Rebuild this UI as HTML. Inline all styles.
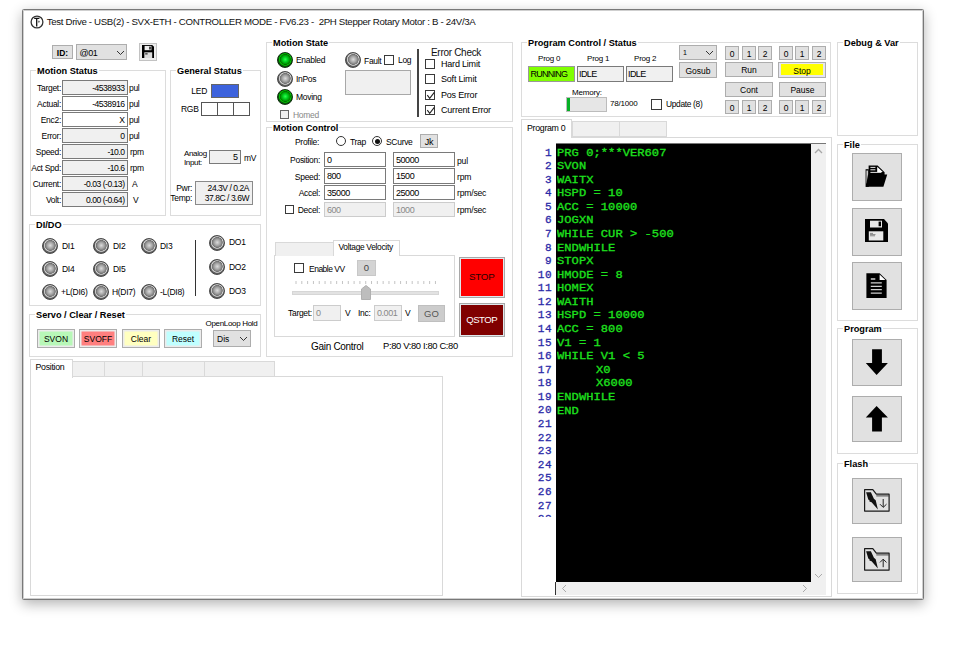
<!DOCTYPE html>
<html><head><meta charset="utf-8">
<style>
*{box-sizing:border-box;margin:0;padding:0}
html,body{width:968px;height:646px;background:#fff;overflow:hidden;font-family:"Liberation Sans",sans-serif;color:#000}
.a{position:absolute}
.t{position:absolute;font-size:8.5px;line-height:10px;white-space:nowrap;letter-spacing:-0.3px;margin-top:-0.3px}
.win{position:absolute;left:22px;top:9px;width:902px;height:591px;border-radius:1.5px;border:1px solid #787878;background:#fff;box-shadow:0 4px 13px rgba(0,0,0,.3),inset 0 0 0 1px #cfcfcf}
.grp{position:absolute;border:1px solid #dcdcdc}
.gt{position:absolute;font-size:9.2px;font-weight:bold;line-height:10px;background:#fff;padding:0 1px;white-space:nowrap;margin-top:1px}
.box{position:absolute;border:1px solid #7a7a7a;background:#f0f0f0;font-size:9px;line-height:13px;white-space:nowrap;overflow:hidden;letter-spacing:-0.45px}
.w{background:#fff}
.r{text-align:right;padding-right:2.5px}
.l{padding-left:2px}
.btn{position:absolute;border:1px solid #adadad;background:#e1e1e1;font-size:8.5px;text-align:center;white-space:nowrap;padding-top:0.7px}
.led{position:absolute;width:16px;height:16px;border-radius:50%;border:1.3px solid #474747}
.lg{background:radial-gradient(circle 6.7px at 52% 46%,#dcdcdc 0,#a2a2a2 3.2px,#7e7e7e 4.7px,#707070 5.1px,#d2d2d2 5.6px,#bababa 6.1px,#5e5e5e 6.7px)}
.lgr{border-color:#0e300e;background:radial-gradient(circle 6.7px at 52% 46%,#30ff50 0,#00d020 2.4px,#009000 4.6px,#006a00 5.1px,#00c400 5.6px,#00b000 6.1px,#0a500a 6.7px)}
.cb{position:absolute;width:10px;height:10px;border:1px solid #3a3a3a;background:#fff}
</style></head><body>
<div class="win"></div>
<!-- title -->
<svg class="a" style="left:29.7px;top:14.9px" width="14" height="14" viewBox="0 0 14 14"><circle cx="7" cy="7" r="5.9" fill="none" stroke="#333" stroke-width="1.3"/><path d="M4.2 3.4h5.2M6.7 3.4v8" stroke="#111" stroke-width="1.3" fill="none"/><path d="M8.4 6.6h1.4M8.8 5.6v2.2" stroke="#444" stroke-width=".7"/></svg>
<div class="t" style="left:46.7px;top:16px;font-size:9.7px;line-height:12px;color:#111;letter-spacing:-0.33px">Test Drive - USB(2) - SVX-ETH - CONTROLLER MODE - FV6.23 -&nbsp; 2PH Stepper Rotary Motor : B - 24V/3A</div>
<!-- ID row -->
<div class="btn" style="left:52px;top:45px;width:21px;height:14px;font-weight:bold;font-size:8.5px;line-height:13px">ID:</div>
<div class="btn" style="left:76px;top:44px;width:51px;height:16px;text-align:left;padding-left:2.5px;font-size:9px;letter-spacing:-0.4px;line-height:14px">@01</div>
<svg class="a" style="left:115.5px;top:50px" width="9" height="6" viewBox="0 0 9 6"><path d="M1 1l3.5 3.5L8 1" fill="none" stroke="#333" stroke-width="1"/></svg>
<div class="btn" style="left:139px;top:43px;width:18px;height:18px;background:#ededed;border-color:#c2c2c2"></div>
<svg class="a" style="left:141.8px;top:45.1px" width="12.5" height="13" viewBox="0 0 12.5 13"><path d="M0 0H10.2L12.5 2.3V13H0z" fill="#000"/><rect x="2.6" y="0.9" width="6.8" height="4.3" fill="#ececec"/><rect x="7.3" y="1.6" width="1.4" height="2.9" fill="#000"/><rect x="2.3" y="7.3" width="7.9" height="5.7" fill="#dcdcdc"/><path d="M3.2 8.9h2.4" stroke="#000" stroke-width="1"/></svg>

<!-- Motion Status group -->
<div class="grp" style="left:30px;top:70px;width:136px;height:146px"></div>
<div class="gt" style="left:36px;top:65px">Motion Status</div>
<div class="t" style="right:907px;top:83px">Target:</div>
<div class="box r" style="line-height:14px;left:62px;top:80px;width:66px;height:15px;font-size:8.6px;letter-spacing:-0.5px">-4538933</div>
<div class="t" style="left:129px;top:83px">pul</div>
<div class="t" style="right:907px;top:99px">Actual:</div>
<div class="box r w" style="line-height:14px;left:62px;top:96px;width:66px;height:15px;font-size:8.6px;letter-spacing:-0.5px">-4538916</div>
<div class="t" style="left:129px;top:99px">pul</div>
<div class="t" style="right:907px;top:115px">Enc2:</div>
<div class="box r w" style="line-height:14px;left:62px;top:112px;width:66px;height:15px;font-size:8.6px;letter-spacing:-0.5px">X</div>
<div class="t" style="left:129px;top:115px">pul</div>
<div class="t" style="right:907px;top:131px">Error:</div>
<div class="box r" style="line-height:14px;left:62px;top:128px;width:66px;height:15px;font-size:8.6px;letter-spacing:-0.5px">0</div>
<div class="t" style="left:129px;top:131px">pul</div>
<div class="t" style="right:907px;top:147px">Speed:</div>
<div class="box r" style="line-height:14px;left:62px;top:144px;width:66px;height:15px;font-size:8.6px;letter-spacing:-0.5px">-10.0</div>
<div class="t" style="left:130px;top:147px">rpm</div>
<div class="t" style="right:907px;top:163px">Act Spd:</div>
<div class="box r" style="line-height:14px;left:62px;top:160px;width:66px;height:15px;font-size:8.6px;letter-spacing:-0.5px">-10.6</div>
<div class="t" style="left:130px;top:163px">rpm</div>
<div class="t" style="right:907px;top:179px">Current:</div>
<div class="box r" style="line-height:14px;left:62px;top:176px;width:66px;height:15px;font-size:8.6px;letter-spacing:-0.5px">-0.03 (-0.13)</div>
<div class="t" style="left:132px;top:179px">A</div>
<div class="t" style="right:907px;top:195px">Volt:</div>
<div class="box r" style="line-height:14px;left:62px;top:192px;width:66px;height:15px;font-size:8.6px;letter-spacing:-0.5px">0.00 (-0.64)</div>
<div class="t" style="left:133px;top:195px">V</div>

<!-- General Status -->
<div class="grp" style="left:170px;top:70px;width:91px;height:146px"></div>
<div class="gt" style="left:176px;top:65px">General Status</div>
<div class="t" style="right:761px;top:86px">LED</div>
<div class="a" style="left:211px;top:84px;width:28px;height:14px;background:#3d63dd;border:1px solid #666"></div>
<div class="t" style="left:181px;top:104px">RGB</div>
<div class="a" style="left:201px;top:102px;width:17px;height:14px;border:1px solid #555;background:#fff"></div>
<div class="a" style="left:217px;top:102px;width:17px;height:14px;border:1px solid #555;background:#fff"></div>
<div class="a" style="left:233px;top:102px;width:17px;height:14px;border:1px solid #555;background:#fff"></div>
<div class="t" style="left:184px;top:149px;line-height:9.5px;font-size:8px;letter-spacing:-0.35px">Analog<br>Input:</div>
<div class="box r" style="left:209px;top:150px;width:32px;height:14px;line-height:13px">5</div>
<div class="t" style="left:244px;top:153px">mV</div>
<div class="t" style="right:776px;top:183px">Pwr:</div>
<div class="t" style="right:776px;top:193px">Temp:</div>
<div class="box r" style="left:195px;top:181px;width:58px;height:24px;line-height:10px;padding-top:1px;padding-right:3px;font-size:8.5px;letter-spacing:-0.45px;border-color:#8a8a8a">24.3V / 0.2A<br>37.8C / 3.6W</div>

<!-- DI/DO -->
<div class="grp" style="left:29px;top:224px;width:232px;height:82px"></div>
<div class="gt" style="left:35px;top:219px">DI/DO</div>
<div class="led lg" style="left:42px;top:238px"></div><div class="t" style="left:62px;top:241px">DI1</div>
<div class="led lg" style="left:93px;top:238px"></div><div class="t" style="left:113px;top:241px">DI2</div>
<div class="led lg" style="left:141px;top:238px"></div><div class="t" style="left:160px;top:241px">DI3</div>
<div class="led lg" style="left:42px;top:261px"></div><div class="t" style="left:62px;top:264px">DI4</div>
<div class="led lg" style="left:93px;top:261px"></div><div class="t" style="left:113px;top:264px">DI5</div>
<div class="led lg" style="left:42px;top:284px"></div><div class="t" style="left:61px;top:287px">+L(DI6)</div>
<div class="led lg" style="left:93px;top:284px"></div><div class="t" style="left:112px;top:287px">H(DI7)</div>
<div class="led lg" style="left:141px;top:284px"></div><div class="t" style="left:160px;top:287px">-L(DI8)</div>
<div class="a" style="left:195px;top:240px;width:1px;height:56px;background:#333"></div>
<div class="led lg" style="left:209px;top:235px"></div><div class="t" style="left:229px;top:237px">DO1</div>
<div class="led lg" style="left:209px;top:259px"></div><div class="t" style="left:229px;top:262px">DO2</div>
<div class="led lg" style="left:209px;top:283px"></div><div class="t" style="left:229px;top:286px">DO3</div>

<!-- Servo -->
<div class="grp" style="left:29px;top:313.5px;width:232px;height:43.5px"></div>
<div class="gt" style="left:35px;top:308.5px">Servo / Clear / Reset</div>
<div class="btn" style="left:37px;top:329px;width:38px;height:19px;background:#b8f8b8;line-height:16px;box-shadow:inset 0 0 0 1.5px #ececec">SVON</div>
<div class="btn" style="left:79px;top:329px;width:38px;height:19px;background:#ff7f7f;line-height:16px;box-shadow:inset 0 0 0 1.5px #ececec">SVOFF</div>
<div class="btn" style="left:122px;top:329px;width:38px;height:19px;background:#ffffc0;line-height:16px;box-shadow:inset 0 0 0 1.5px #ececec">Clear</div>
<div class="btn" style="left:164px;top:329px;width:38px;height:19px;background:#c0ffff;line-height:16px;box-shadow:inset 0 0 0 1.5px #ececec">Reset</div>
<div class="t" style="left:205.5px;top:319px;font-size:8px;letter-spacing:-0.32px">OpenLoop Hold</div>
<div class="btn" style="left:213px;top:330px;width:38px;height:17px;text-align:left;padding-left:3px;line-height:15px">Dis</div>
<svg class="a" style="left:239px;top:336px" width="9" height="6" viewBox="0 0 9 6"><path d="M1 1l3.5 3.5L8 1" fill="none" stroke="#333" stroke-width="1"/></svg>

<!-- Position tabs -->
<div class="a" style="left:30px;top:376px;width:413px;height:220px;border:1px solid #d9d9d9;background:#fff"></div>
<div class="a" style="left:72px;top:361px;width:203px;height:16px;background:#f0f0f0;border:1px solid #d9d9d9"></div>
<div class="a" style="left:104px;top:361px;width:1px;height:15px;background:#d9d9d9"></div>
<div class="a" style="left:142px;top:361px;width:1px;height:15px;background:#d9d9d9"></div>
<div class="a" style="left:204px;top:361px;width:1px;height:15px;background:#d9d9d9"></div>
<div class="a" style="left:30px;top:359px;width:43px;height:18.5px;background:#fff;border:1px solid #d9d9d9;border-bottom:none"></div>
<div class="t" style="left:35.5px;top:362.5px;font-size:8.8px">Position</div>
<!-- Motion State -->
<div class="grp" style="left:265.5px;top:41.5px;width:247px;height:80.5px"></div>
<div class="gt" style="left:272px;top:37px">Motion State</div>
<div class="led lgr" style="left:277px;top:52px"></div><div class="t" style="left:296px;top:55px">Enabled</div>
<div class="led lg" style="left:277px;top:71px"></div><div class="t" style="left:296px;top:74px">InPos</div>
<div class="led lgr" style="left:277px;top:89px"></div><div class="t" style="left:296px;top:92px">Moving</div>
<div class="cb" style="left:280px;top:110px;width:9px;height:9px;border-color:#666;background:#f0f0f0"></div><div class="t" style="left:293px;top:110px;color:#888">Homed</div>
<div class="led lg" style="left:345px;top:52px"></div><div class="t" style="left:364px;top:56px">Fault</div>
<div class="cb" style="left:384px;top:55px"></div><div class="t" style="left:398px;top:55px">Log</div>
<div class="box" style="left:345px;top:70px;width:66px;height:25px;border-color:#a8a8a8"></div>
<div class="a" style="left:417px;top:49px;width:1.5px;height:68px;background:#444"></div>
<div class="t" style="left:431px;top:47px;font-size:10px;line-height:12px;color:#111">Error Check</div>
<div class="cb" style="left:425px;top:59px"></div><div class="t" style="left:441px;top:59px;font-size:9px;letter-spacing:-0.2px">Hard Limit</div>
<div class="cb" style="left:425px;top:74px"></div><div class="t" style="left:441px;top:74px;font-size:9px;letter-spacing:-0.2px">Soft Limit</div>
<div class="cb" style="left:425px;top:90px"></div><div class="t" style="left:441px;top:90px;font-size:9px;letter-spacing:-0.2px">Pos Error</div>
<svg class="a" style="left:426px;top:91px" width="9" height="9" viewBox="0 0 9 9"><path d="M1.3 4.2l2.4 3.2 4.6-6" fill="none" stroke="#222" stroke-width="1.1"/></svg>
<div class="cb" style="left:425px;top:105px"></div><div class="t" style="left:441px;top:105px;font-size:9px;letter-spacing:-0.2px">Current Error</div>
<svg class="a" style="left:426px;top:106px" width="9" height="9" viewBox="0 0 9 9"><path d="M1.3 4.2l2.4 3.2 4.6-6" fill="none" stroke="#222" stroke-width="1.1"/></svg>

<!-- Motion Control -->
<div class="grp" style="left:265.5px;top:127px;width:247px;height:230px"></div>
<div class="gt" style="left:272px;top:122px">Motion Control</div>
<div class="t" style="left:295px;top:137px">Profile:</div>
<div class="a" style="left:336px;top:136px;width:10px;height:10px;border:1px solid #333;border-radius:50%;background:#fff"></div>
<div class="t" style="left:350px;top:137px">Trap</div>
<div class="a" style="left:372px;top:136px;width:10px;height:10px;border:1px solid #333;border-radius:50%;background:#fff"></div>
<div class="a" style="left:374.5px;top:138.5px;width:5px;height:5px;border-radius:50%;background:#111"></div>
<div class="t" style="left:386px;top:137px">SCurve</div>
<div class="btn" style="left:420px;top:134px;width:18px;height:14px;line-height:12px;font-size:9px;letter-spacing:-0.3px">Jk</div>
<div class="t" style="right:648px;top:155px">Position:</div>
<div class="box w l" style="left:324px;top:152px;width:62px;height:15px;line-height:14px">0</div>
<div class="box w l" style="left:393px;top:152px;width:62px;height:15px;line-height:14px">50000</div>
<div class="t" style="left:457px;top:156px;font-size:8.6px;letter-spacing:-0.2px">pul</div>
<div class="t" style="right:648px;top:172px">Speed:</div>
<div class="box w l" style="left:324px;top:168px;width:62px;height:16px;line-height:15px">800</div>
<div class="box w l" style="left:393px;top:168px;width:62px;height:16px;line-height:15px">1500</div>
<div class="t" style="left:457px;top:172px;font-size:8.6px;letter-spacing:-0.2px">rpm</div>
<div class="t" style="right:648px;top:188px">Accel:</div>
<div class="box w l" style="left:324px;top:185px;width:62px;height:15px;line-height:14px">35000</div>
<div class="box w l" style="left:393px;top:185px;width:62px;height:15px;line-height:14px">25000</div>
<div class="t" style="left:457px;top:188px;font-size:8.6px;letter-spacing:-0.2px">rpm/sec</div>
<div class="cb" style="left:285px;top:205px;width:9px;height:9px"></div>
<div class="t" style="right:648px;top:205px">Decel:</div>
<div class="box l" style="left:324px;top:202px;width:62px;height:15px;line-height:14px;color:#888;border-color:#ccc">600</div>
<div class="box l" style="left:393px;top:202px;width:62px;height:15px;line-height:14px;color:#888;border-color:#ccc">1000</div>
<div class="t" style="left:457px;top:205px;font-size:8.6px;letter-spacing:-0.2px">rpm/sec</div>

<!-- VV tabs -->
<div class="a" style="left:274px;top:255px;width:181px;height:82px;border:1px solid #d9d9d9;background:#fff"></div>
<div class="a" style="left:275px;top:242px;width:59px;height:14px;background:#f0f0f0;border:1px solid #d9d9d9;border-bottom:none"></div>
<div class="a" style="left:333px;top:240px;width:67px;height:16px;background:#fff;border:1px solid #d9d9d9;border-bottom:none"></div>
<div class="t" style="left:338.5px;top:242.5px;font-size:8.4px;letter-spacing:-0.3px">Voltage Velocity</div>
<div class="cb" style="left:294px;top:263px"></div>
<div class="t" style="left:309px;top:264px;letter-spacing:-0.5px">Enable VV</div>
<div class="a" style="left:357px;top:260px;width:19px;height:16px;background:#d4d4d4;border:1px solid #c8c8c8;font-size:9.5px;line-height:14px;text-align:center;color:#444">0</div>
<div class="a" style="left:292px;top:291px;width:147px;height:3.5px;background:#e2e2e2;border:1px solid #d6d6d6"></div>
<svg class="a" style="left:295px;top:281px" width="142" height="4"><path d="M1.00 0v3M6.81 0v3M12.62 0v3M18.43 0v3M24.24 0v3M30.05 0v3M35.86 0v3M41.67 0v3M47.48 0v3M53.29 0v3M59.10 0v3M64.91 0v3M70.72 0v3M76.53 0v3M82.34 0v3M88.15 0v3M93.96 0v3M99.77 0v3M105.58 0v3M111.39 0v3M117.20 0v3M123.01 0v3M128.82 0v3M134.63 0v3M140.44 0v3" stroke="#c4c4c4" stroke-width="1"/></svg>
<svg class="a" style="left:361px;top:285px" width="10" height="15" viewBox="0 0 10 15"><path d="M0.5 4L5 0.5 9.5 4v10.5h-9z" fill="#bdbdbd" stroke="#b0b0b0"/></svg>
<div class="t" style="left:288px;top:308px">Target:</div>
<div class="box l" style="left:313px;top:305px;width:28px;height:16px;line-height:15px;color:#888;border-color:#ccc">0</div>
<div class="t" style="left:345px;top:308px">V</div>
<div class="t" style="left:358px;top:308px">Inc:</div>
<div class="box l" style="left:374px;top:305px;width:28px;height:16px;line-height:15px;color:#888;border-color:#ccc">0.001</div>
<div class="t" style="left:405px;top:308px">V</div>
<div class="a" style="left:418px;top:305px;width:27px;height:17px;background:#cccccc;border:1px solid #bfbfbf;font-size:9.5px;line-height:15px;text-align:center;color:#555">GO</div>
<div class="a" style="left:458.5px;top:256.5px;width:46.5px;height:41.5px;border:1px solid #a8a8a8;background:#dfe8ec;padding:1.5px"><div style="width:100%;height:100%;background:#ff0000;font-size:9.8px;letter-spacing:-0.2px;line-height:35.5px;text-align:center;color:#2a0000">STOP</div></div>
<div class="a" style="left:458.5px;top:302.5px;width:46.5px;height:34.5px;border:1px solid #a8a8a8;background:#dfe8ec;padding:1.5px"><div style="width:100%;height:100%;background:#800000;font-size:9.6px;letter-spacing:-0.45px;line-height:29.5px;text-align:center;color:#fff">QSTOP</div></div>
<div class="t" style="left:311px;top:341px;font-size:10px;line-height:12px">Gain Control</div>
<div class="t" style="left:383px;top:341.5px;font-size:9.4px;line-height:10px;letter-spacing:-0.35px">P:80 V:80 I:80 C:80</div>
<!-- Program Control -->
<div class="grp" style="left:521px;top:41.5px;width:310px;height:75.5px"></div>
<div class="gt" style="left:527px;top:36.5px">Program Control / Status</div>
<div class="t" style="left:538px;top:54px;font-size:8px;letter-spacing:-0.2px">Prog 0</div>
<div class="t" style="left:587px;top:54px;font-size:8px;letter-spacing:-0.2px">Prog 1</div>
<div class="t" style="left:634px;top:54px;font-size:8px;letter-spacing:-0.2px">Prog 2</div>
<div class="box l" style="left:528px;top:66px;width:47px;height:16px;line-height:15px;background:#80ff00;border-color:#999;font-size:9px;letter-spacing:-0.75px;padding-left:1.5px">RUNNING</div>
<div class="box l" style="left:577px;top:66px;width:47px;height:16px;line-height:15px;font-size:9px;letter-spacing:-0.6px;padding-left:1px">IDLE</div>
<div class="box l" style="left:626px;top:66px;width:47px;height:16px;line-height:15px;font-size:9px;letter-spacing:-0.6px;padding-left:1px">IDLE</div>
<div class="btn" style="left:679px;top:45px;width:38px;height:15px;text-align:left;padding-left:3px;font-size:7px;line-height:12px">1</div>
<svg class="a" style="left:705px;top:50px" width="9" height="6" viewBox="0 0 9 6"><path d="M1 1l3.5 3.5L8 1" fill="none" stroke="#333" stroke-width="1"/></svg>
<div class="btn" style="left:679px;top:62px;width:38px;height:16px;line-height:14px">Gosub</div>
<div class="btn" style="left:725px;top:46px;width:14px;height:14px;line-height:12px">0</div>
<div class="btn" style="left:742px;top:46px;width:14px;height:14px;line-height:12px">1</div>
<div class="btn" style="left:758px;top:46px;width:14px;height:14px;line-height:12px">2</div>
<div class="btn" style="left:779px;top:46px;width:14px;height:14px;line-height:12px">0</div>
<div class="btn" style="left:795px;top:46px;width:14px;height:14px;line-height:12px">1</div>
<div class="btn" style="left:812px;top:46px;width:14px;height:14px;line-height:12px">2</div>
<div class="btn" style="left:725px;top:62px;width:48px;height:15px;line-height:13px">Run</div>
<div class="btn" style="left:778px;top:61.5px;width:48px;height:16px;background:#e6e6f0;padding:1.5px 2px"><div style="background:#ffff00;height:100%;line-height:12px;padding-top:0.5px">Stop</div></div>
<div class="btn" style="left:725px;top:82px;width:48px;height:15px;line-height:13px">Cont</div>
<div class="btn" style="left:779px;top:82px;width:47px;height:15px;line-height:13px">Pause</div>
<div class="btn" style="left:725px;top:100px;width:14px;height:14px;line-height:12px">0</div>
<div class="btn" style="left:742px;top:100px;width:14px;height:14px;line-height:12px">1</div>
<div class="btn" style="left:758px;top:100px;width:14px;height:14px;line-height:12px">2</div>
<div class="btn" style="left:779px;top:100px;width:14px;height:14px;line-height:12px">0</div>
<div class="btn" style="left:795px;top:100px;width:14px;height:14px;line-height:12px">1</div>
<div class="btn" style="left:812px;top:100px;width:14px;height:14px;line-height:12px">2</div>
<div class="t" style="left:572px;top:88px;font-size:8px;letter-spacing:-0.2px">Memory:</div>
<div class="a" style="left:566px;top:97px;width:41px;height:15px;border:1px solid #bcbcbc;background:#e6e6e6"></div>
<div class="a" style="left:567px;top:98px;width:3px;height:13px;background:#06b025"></div>
<div class="t" style="left:610px;top:99px;font-size:8px;letter-spacing:-0.2px">78/1000</div>
<div class="cb" style="left:651px;top:99px;width:11px;height:11px"></div>
<div class="t" style="left:666px;top:99px;font-size:8.4px;letter-spacing:-0.32px">Update (8)</div>

<!-- Program tabs + editor -->
<div class="a" style="left:521px;top:136.5px;width:310.5px;height:460px;border:1px solid #d9d9d9;background:#fff"></div>
<div class="a" style="left:572px;top:121px;width:95px;height:16px;background:#f0f0f0;border:1px solid #d9d9d9"></div>
<div class="a" style="left:619px;top:121px;width:1px;height:15px;background:#d9d9d9"></div>
<div class="a" style="left:521px;top:119px;width:51px;height:19px;background:#fff;border:1px solid #d9d9d9;border-bottom:none"></div>
<div class="t" style="left:527px;top:123px;font-size:8.8px">Program 0</div>
<div class="a" style="left:556px;top:143px;width:256px;height:439px;background:#000;border-top:1px solid #777"></div>
<div class="a" style="left:811px;top:143px;width:14.5px;height:439px;background:#f0f0f0;border-top:1px solid #777"></div>
<div class="a" style="left:556px;top:582px;width:270px;height:13px;background:#f0f0f0"></div>
<div class="a" style="left:555px;top:582px;width:1px;height:13px;background:#333"></div>
<svg class="a" style="left:813.5px;top:148px" width="9" height="6" viewBox="0 0 9 6"><path d="M1 5l3.5-3.5L8 5" fill="none" stroke="#a6a6a6" stroke-width="1.3"/></svg>
<svg class="a" style="left:814px;top:573px" width="9" height="6" viewBox="0 0 9 6"><path d="M1 1l3.5 3.5L8 1" fill="none" stroke="#aaa" stroke-width="1"/></svg>
<svg class="a" style="left:561px;top:584px" width="6" height="9" viewBox="0 0 6 9"><path d="M5 1L1.5 4.5 5 8" fill="none" stroke="#aaa" stroke-width="1"/></svg>
<svg class="a" style="left:802px;top:584px" width="6" height="9" viewBox="0 0 6 9"><path d="M1 1l3.5 3.5L1 8" fill="none" stroke="#aaa" stroke-width="1"/></svg>
<div class="a" style="left:525px;top:145px;width:27px;height:371.5px;overflow:hidden;font-family:'Liberation Mono',monospace;font-weight:normal;-webkit-text-stroke:0.3px #2a2aa8;font-size:11px;letter-spacing:0.5px;line-height:13.575px;text-align:right;color:#2a2aa8;white-space:pre;padding-top:1.5px">1
2
3
4
5
6
7
8
9
10
11
12
13
14
15
16
17
18
19
20
21
22
23
24
25
26
27
28</div>
<div class="a" style="left:557px;top:145px;width:254px;height:437px;overflow:hidden"><div style="transform:scaleY(0.84);transform-origin:0 0;font-family:'Liberation Mono',monospace;font-weight:normal;-webkit-text-stroke:0.35px #1ee01e;font-size:12.1px;letter-spacing:0.04px;line-height:16.16px;color:#1ee01e;padding-top:1.6px;white-space:pre">PRG 0;***VER607
SVON
WAITX
HSPD = 10
ACC = 10000
JOGXN
WHILE CUR &gt; -500
ENDWHILE
STOPX
HMODE = 8
HOMEX
WAITH
HSPD = 10000
ACC = 800
V1 = 1
WHILE V1 &lt; 5
     <span style="padding-left:2.5px">X0</span>
     <span style="padding-left:2.5px">X6000</span>
ENDWHILE
END</div></div>

<!-- Right column -->
<div class="grp" style="left:837px;top:42px;width:81px;height:94px"></div>
<div class="gt" style="left:843px;top:37px">Debug &amp; Var</div>
<div class="grp" style="left:837px;top:144px;width:81px;height:177px"></div>
<div class="gt" style="left:843px;top:139px">File</div>
<div class="btn" style="left:852px;top:153px;width:50px;height:48px"></div>
<div class="btn" style="left:852px;top:208px;width:50px;height:48px"></div>
<div class="btn" style="left:852px;top:262px;width:50px;height:48px"></div>
<div class="grp" style="left:837px;top:328px;width:81px;height:126px"></div>
<div class="gt" style="left:843px;top:323px">Program</div>
<div class="btn" style="left:852px;top:339px;width:50px;height:47px"></div>
<div class="btn" style="left:852px;top:396px;width:50px;height:46px"></div>
<div class="grp" style="left:837px;top:463px;width:81px;height:131px"></div>
<div class="gt" style="left:843px;top:458px">Flash</div>
<div class="btn" style="left:852px;top:478px;width:50px;height:46px"></div>
<div class="btn" style="left:852px;top:537px;width:50px;height:45px"></div>
<!-- icons right col -->
<svg class="a" style="left:865px;top:165px" width="23" height="23" viewBox="0 0 23 23">
<path d="M0.6 4.2h3.2v17.6H0.6z" fill="#000"/><path d="M1.5 5.5h1.3v13H1.5z" fill="#fff"/>
<path d="M3.6 0.4H12.6L19.6 7.2V10H3.6z" fill="#000"/>
<path d="M5.4 2.4h5M5.4 4.8h5M5.4 7.4h11" stroke="#fff" stroke-width="0.9"/>
<path d="M12.2 1.8L17.8 7H12.2z" fill="#fff"/>
<path d="M3 9.4H22.2L18.4 21.8H0.8z" fill="#000"/>
</svg>
<svg class="a" style="left:865px;top:219px" width="23" height="23" viewBox="0 0 23 23">
<path d="M0 0H19L23 4.5V23H0z" fill="#000"/>
<path d="M5 1.7H17V8.5H5z" fill="#e8e8e8"/><path d="M13.6 2.6H16V7.2H13.6z" fill="#000"/>
<path d="M3.8 12.3H18.3V21.5H3.8z" fill="#e8e8e8"/>
<path d="M5 14.4h3M5 15.6h5.5M5 16.8h5" stroke="#444" stroke-width="0.6"/>
</svg>
<svg class="a" style="left:866px;top:273px" width="21" height="25" viewBox="0 0 21 25">
<path d="M0.4 0.2H13.6L20.6 7V25H0.4z" fill="#000"/>
<path d="M13.6 1.6L19.4 7H13.6z" fill="#fff"/>
<path d="M4.8 6h4.5M4.8 9.9h11M4.8 13.3h11M4.8 16.7h11M4.8 20.1h11" stroke="#d0d0d0" stroke-width="1.3"/>
</svg>
<svg class="a" style="left:865px;top:349px" width="24" height="27" viewBox="0 0 24 27"><path d="M7.1 0.2H16.9V14H22.9L11.6 26 0.8 14H7.1z" fill="#000"/></svg>
<svg class="a" style="left:865px;top:405px" width="24" height="27" viewBox="0 0 24 27"><path d="M11.6 1L22.9 12.5H16.9V26.6H7.1V12.5H0.8z" fill="#000"/></svg>
<svg class="a" style="left:862px;top:486px" width="30" height="28" viewBox="0 0 30 28">
<path d="M2.6 3.7H10.8L14.3 8.2H27.1V25.1H2.6z" fill="none" stroke="#1a1a1a" stroke-width="1.2" stroke-linejoin="round"/>
<path d="M14.3 9.9H27.1" stroke="#444" stroke-width="1"/>
<path d="M4.1 6.3H8.9L11.9 12.8 13.7 14.2 15.9 23.6 9.6 16.2 7.4 15.4 7.6 14.4 6.3 13.4z" fill="#111"/>
<path d="M21.2 13v8M18 18.2l3.2 3.2 3.3-3.2" fill="none" stroke="#222" stroke-width="1"/>
</svg>
<svg class="a" style="left:862px;top:545px" width="30" height="28" viewBox="0 0 30 28">
<path d="M2.6 3.7H10.8L14.3 8.2H27.1V25.1H2.6z" fill="none" stroke="#1a1a1a" stroke-width="1.2" stroke-linejoin="round"/>
<path d="M14.3 9.9H27.1" stroke="#444" stroke-width="1"/>
<path d="M4.1 6.3H8.9L11.9 12.8 13.7 14.2 15.9 23.6 9.6 16.2 7.4 15.4 7.6 14.4 6.3 13.4z" fill="#111"/>
<path d="M21.2 14.2v8M18 17.4l3.2-3.2 3.3 3.2" fill="none" stroke="#222" stroke-width="1"/>
</svg>

</body></html>
